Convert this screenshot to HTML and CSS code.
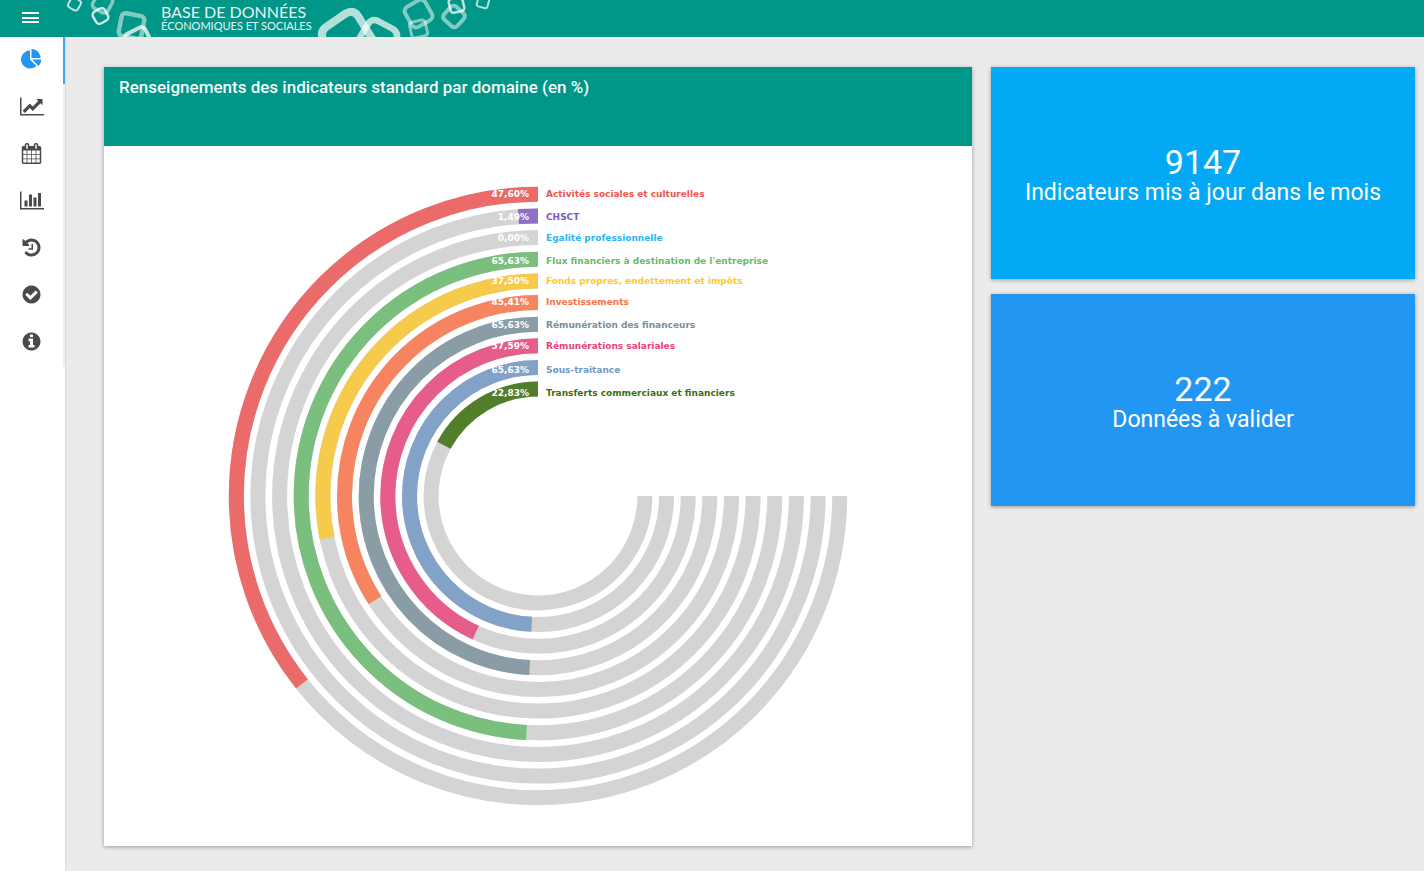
FILE: index.html
```html
<!DOCTYPE html>
<html lang="fr">
<head>
<meta charset="utf-8">
<title>Base de données économiques et sociales</title>
<link rel="stylesheet" href="styles.css">
</head>
<body>
<header class="topbar">
  <button class="menu-button" type="button" aria-label="Menu">
    <svg width="18" height="11" viewBox="0 0 18 11"><path fill="#fff" d="M0 0h17v2H0zM0 5h17v2H0zM0 9h17v2H0z"/></svg>
  </button>
  <div class="brand">
    <svg class="brand-art" width="95" height="37" viewBox="66 0 95 37" fill="none" stroke="#fff" aria-hidden="true">
      <rect x="-5.500" y="-5.500" width="11" height="11" rx="3" stroke-width="2" stroke-opacity=".75" transform="translate(74.500 4) rotate(30)"/>
      <rect x="-8.500" y="-8.500" width="17" height="17" rx="4" stroke-width="3.500" stroke-opacity=".5" transform="translate(102.500 3) rotate(28)"/>
      <rect x="-6.800" y="-6.800" width="13.600" height="13.600" rx="4" stroke-width="2.500" stroke-opacity=".8" transform="translate(100.500 16) rotate(-30)"/>
      <rect x="-11.500" y="-11.500" width="23" height="23" rx="4" stroke-width="4.500" stroke-opacity=".5" transform="translate(131.500 26) rotate(11)"/>
      <rect x="-11" y="-11" width="22" height="22" rx="4" stroke-width="4" stroke-opacity=".75" transform="translate(138.500 40.500) rotate(-27)"/>
    </svg>
    <div class="brand-name">
      <span class="brand-title">BASE DE DONNÉES</span>
      <span class="brand-sub">ÉCONOMIQUES ET SOCIALES</span>
    </div>
    <svg class="brand-art" width="186" height="37" viewBox="314 0 186 37" fill="none" stroke="#fff" aria-hidden="true">
      <path stroke-width="8" stroke-opacity=".7" stroke-linejoin="round" d="M324 42 Q319 32 326 27 L345 14 Q353 9 358 16 L373 40"/>
      <path stroke-width="6.500" stroke-opacity=".7" stroke-linejoin="round" d="M359 39 L368 24 Q372 18 378 21 L393 29 Q399 33 396 40"/>
      <rect x="-11.500" y="-11.500" width="23" height="23" rx="5" stroke-width="4" stroke-opacity=".5" transform="translate(418.500 13.500) rotate(-30)"/>
      <rect x="-8" y="-8" width="16" height="16" rx="3" stroke-width="3" stroke-opacity=".5" transform="translate(418.500 29) rotate(-13)"/>
      <rect x="-8.800" y="-8.800" width="17.600" height="17.600" rx="4" stroke-width="4" stroke-opacity=".5" transform="translate(454 16.500) rotate(42)"/>
      <rect x="-7" y="-7" width="14" height="14" rx="3" stroke-width="2.500" stroke-opacity=".75" transform="translate(456.500 5) rotate(-13)"/>
      <rect x="-5.500" y="-5.500" width="11" height="11" rx="2" stroke-width="2" stroke-opacity=".7" transform="translate(483 2) rotate(15)"/>
    </svg>
  </div>
</header>

<div class="shell">
  <nav class="sidebar" aria-label="Navigation">
    <a class="nav-item active" href="#domaines" aria-label="Domaines"><svg width="21" height="21" viewBox="0 0 1792 1792"><path d="M768 890l546 546q-106 108-247.500 168t-298.500 60q-209 0-385.500-103t-279.500-279.500-103-385.500 103-385.500 279.500-279.500 385.500-103v762zm187 6h773q0 157-60 298.500t-168 247.500zm709-128h-768v-768q209 0 385.500 103t279.500 279.500 103 385.500z"/></svg></a>
    <a class="nav-item" href="#evolution" aria-label="Évolution"><svg width="24" height="21" viewBox="0 0 2048 1792"><path d="M2048 1536v128h-2048v-1536h128v1408h1920zm-128-1248v435q0 21-19.500 29.500t-35.500-7.500l-121-121-633 633q-10 10-23 10t-23-10l-233-233-416 416-192-192 585-585q10-10 23-10t23 10l233 233 464-464-121-121q-16-16-7.500-35.500t29.500-19.500h435q14 0 23 9t9 23z"/></svg></a>
    <a class="nav-item" href="#calendrier" aria-label="Calendrier"><svg width="21" height="21" viewBox="0 0 1792 1792"><path d="M192 1664h288v-288h-288v288zm352 0h320v-288h-320v288zm-352-352h288v-320h-288v320zm352 0h320v-320h-320v320zm-352-384h288v-288h-288v288zm736 736h320v-288h-320v288zm-384-736h320v-288h-320v288zm768 736h288v-288h-288v288zm-384-352h320v-320h-320v320zm-352-864v-288q0-13-9.500-22.500t-22.500-9.500h-64q-13 0-22.500 9.500t-9.500 22.500v288q0 13 9.500 22.500t22.500 9.500h64q13 0 22.500-9.500t9.500-22.500zm736 864h288v-320h-288v320zm-384-384h320v-288h-320v288zm384 0h288v-288h-288v288zm32-480v-288q0-13-9.500-22.500t-22.500-9.500h-64q-13 0-22.500 9.500t-9.500 22.500v288q0 13 9.500 22.500t22.500 9.500h64q13 0 22.500-9.500t9.500-22.500zm384-64v1280q0 52-38 90t-90 38h-1408q-52 0-90-38t-38-90v-1280q0-52 38-90t90-38h128v-96q0-66 47-113t113-47h64q66 0 113 47t47 113v96h384v-96q0-66 47-113t113-47h64q66 0 113 47t47 113v96h128q52 0 90 38t38 90z"/></svg></a>
    <a class="nav-item" href="#statistiques" aria-label="Statistiques"><svg width="24" height="21" viewBox="0 0 2048 1792"><path d="M640 896v512h-256v-512h256zm384-512v1024h-256v-1024h256zm1024 1152v128h-2048v-1536h128v1408h1920zm-640-896v768h-256v-768h256zm384-384v1152h-256v-1152h256z"/></svg></a>
    <a class="nav-item" href="#historique" aria-label="Historique"><svg width="21" height="21" viewBox="0 0 1792 1792"><path d="M1664 896q0 156-61 298t-164 245-245 164-298 61q-172 0-327-72.500t-264-204.500q-7-10-6.500-22.500t8.500-20.500l137-138q10-9 25-9 16 2 23 12 73 95 179 147t225 52q104 0 198.500-40.500t163.500-109.500 109.500-163.500 40.500-198.500-40.500-198.500-109.500-163.500-163.500-109.500-198.500-40.500q-98 0-188 35.500t-160 101.500l137 138q31 30 14 69-17 40-59 40h-448q-26 0-45-19t-19-45v-448q0-42 40-59 39-17 69 14l130 129q107-101 244.500-156.500t284.500-55.500q156 0 298 61t245 164 164 245 61 298zm-640-288v448q0 14-9 23t-23 9h-320q-14 0-23-9t-9-23v-64q0-14 9-23t23-9h224v-352q0-14 9-23t23-9h64q14 0 23 9t9 23z"/></svg></a>
    <a class="nav-item" href="#validation" aria-label="Validation"><svg width="21" height="21" viewBox="0 0 1792 1792"><path d="M1412 734q0-28-18-46l-91-90q-19-19-45-19t-45 19l-408 407-226-226q-19-19-45-19t-45 19l-91 90q-18 18-18 46 0 27 18 45l362 362q19 19 45 19 27 0 46-19l543-543q18-18 18-45zm252 162q0 209-103 385.500t-279.500 279.500-385.500 103-385.500-103-279.500-279.500-103-385.500 103-385.500 279.500-279.500 385.500-103 385.500 103 279.500 279.500 103 385.500z"/></svg></a>
    <a class="nav-item" href="#informations" aria-label="Informations"><svg width="21" height="21" viewBox="0 0 1792 1792"><path d="M1152 1376v-160q0-14-9-23t-23-9h-96v-512q0-14-9-23t-23-9h-320q-14 0-23 9t-9 23v160q0 14 9 23t23 9h96v320h-96q-14 0-23 9t-9 23v160q0 14 9 23t23 9h448q14 0 23-9t9-23zm-128-896v-160q0-14-9-23t-23-9h-192q-14 0-23 9t-9 23v160q0 14 9 23t23 9h192q14 0 23-9t9-23zm640 416q0 209-103 385.500t-279.500 279.500-385.500 103-385.500-103-279.500-279.500-103-385.500 103-385.500 279.500-279.500 385.500-103 385.500 103 279.500 279.500 103 385.500z"/></svg></a>
  </nav>

  <main class="dashboard">
    <section class="card">
      <h1 class="card-title">Renseignements des indicateurs standard par domaine (en %)</h1>
      <svg class="chart" viewBox="0 0 868 700" role="img" aria-label="Renseignements par domaine">
        <g transform="translate(434 350)">
          <g class="track">
            <path d="M0-301.700A301.700 301.700 0 1 0 301.700 0"/>
            <path d="M0-280.100A280.100 280.100 0 1 0 280.100 0"/>
            <path d="M0-258.400A258.400 258.400 0 1 0 258.400 0"/>
            <path d="M0-236.800A236.800 236.800 0 1 0 236.800 0"/>
            <path d="M0-215.100A215.100 215.100 0 1 0 215.100 0"/>
            <path d="M0-193.500A193.500 193.500 0 1 0 193.500 0"/>
            <path d="M0-171.800A171.800 171.800 0 1 0 171.800 0"/>
            <path d="M0-150.200A150.200 150.200 0 1 0 150.200 0"/>
            <path d="M0-128.500A128.500 128.500 0 1 0 128.500 0"/>
            <path d="M0-106.900A106.900 106.900 0 1 0 106.900 0"/>
          </g>
          <g class="value">
            <path pathLength="100" stroke="#ea6b6a" stroke-dasharray="47.600 200" d="M0-301.700A301.700 301.700 0 1 0 301.700 0"/>
            <path pathLength="100" stroke="#9070c6" stroke-dasharray="1.490 200" d="M0-280.100A280.100 280.100 0 1 0 280.100 0"/>
            <path pathLength="100" stroke="#7bbf7f" stroke-dasharray="65.630 200" d="M0-236.800A236.800 236.800 0 1 0 236.800 0"/>
            <path pathLength="100" stroke="#f6cb4b" stroke-dasharray="37.500 200" d="M0-215.100A215.100 215.100 0 1 0 215.100 0"/>
            <path pathLength="100" stroke="#f68461" stroke-dasharray="45.410 200" d="M0-193.500A193.500 193.500 0 1 0 193.500 0"/>
            <path pathLength="100" stroke="#8a9ca5" stroke-dasharray="65.630 200" d="M0-171.800A171.800 171.800 0 1 0 171.800 0"/>
            <path pathLength="100" stroke="#e65c8b" stroke-dasharray="57.590 200" d="M0-150.200A150.200 150.200 0 1 0 150.200 0"/>
            <path pathLength="100" stroke="#82a2c7" stroke-dasharray="65.630 200" d="M0-128.500A128.500 128.500 0 1 0 128.500 0"/>
            <path pathLength="100" stroke="#527d2b" stroke-dasharray="22.830 200" d="M0-106.900A106.900 106.900 0 1 0 106.900 0"/>
          </g>
        </g>
        <g class="percent">
          <text x="425" y="51">47,60%</text>
          <text x="425" y="74">1,49%</text>
          <text x="425" y="95">0,00%</text>
          <text x="425" y="118">65,63%</text>
          <text x="425" y="138">37,50%</text>
          <text x="425" y="159">45,41%</text>
          <text x="425" y="182">65,63%</text>
          <text x="425" y="203">57,59%</text>
          <text x="425" y="227">65,63%</text>
          <text x="425" y="250">22,83%</text>
        </g>
        <g class="domain">
          <text x="442" y="51" fill="#ef5350">Activités sociales et culturelles</text>
          <text x="442" y="74" fill="#7e57c2">CHSCT</text>
          <text x="442" y="95" fill="#29b6f6">Egalité professionnelle</text>
          <text x="442" y="118" fill="#66bb6a">Flux financiers à destination de l'entreprise</text>
          <text x="442" y="138" fill="#ffca28">Fonds propres, endettement et impôts</text>
          <text x="442" y="159" fill="#ff7043">Investissements</text>
          <text x="442" y="182" fill="#78909c">Rémunération des financeurs</text>
          <text x="442" y="203" fill="#ec407a">Rémunérations salariales</text>
          <text x="442" y="227" fill="#6f98c6">Sous-traitance</text>
          <text x="442" y="250" fill="#3a7010">Transferts commerciaux et financiers</text>
        </g>
      </svg>
    </section>

    <aside class="tiles">
      <section class="tile tile-light">
        <strong class="tile-number">9147</strong>
        <span class="tile-label">Indicateurs mis à jour dans le mois</span>
      </section>
      <section class="tile tile-blue">
        <strong class="tile-number">222</strong>
        <span class="tile-label">Données à valider</span>
      </section>
    </aside>
  </main>
</div>
</body>
</html>
```

FILE: styles.css
```css
* {
  box-sizing: border-box;
}

body {
  display: flex;
  flex-direction: column;
  min-height: 100vh;
  margin: 0;
  background: #ebebeb;
  font-family: Roboto, "Liberation Sans", sans-serif;
}

svg {
  display: block;
}

.topbar {
  display: flex;
  height: 37px;
  background: #009688;
  color: #fff;
}

.menu-button {
  width: 66px;
  padding: 0 0 2px 22px;
  border: 0;
  background: none;
  cursor: pointer;
}

.brand {
  display: flex;
}

.brand-name {
  display: flex;
  flex-direction: column;
  width: 153px;
  padding-top: 3px;
  font-family: Lato, sans-serif;
  white-space: nowrap;
  opacity: 0.9;
}

.brand-title {
  font-size: 16px;
  line-height: 17px;
}

.brand-sub {
  font-size: 11px;
  line-height: 12px;
}

.shell {
  display: flex;
  flex: 1;
}

.sidebar {
  flex: none;
  width: 65px;
  background: #fff;
  box-shadow: 0 0 2px rgba(0, 0, 0, 0.2);
}

.nav-item {
  display: flex;
  justify-content: center;
  padding: 12px 0 14px;
  border-right: 2px solid #eee;
  fill: #4a4a4a;
}

.nav-item.active {
  border-right-color: #42a5f5;
  fill: #2196f3;
}

.dashboard {
  display: grid;
  flex: 1;
  grid-template-columns: 868fr 424fr;
  gap: 19px;
  align-items: start;
  padding: 30px 9px 25px 39px;
}

.card,
.tile {
  box-shadow: 0 1px 4px rgba(0, 0, 0, 0.35);
}

.card {
  background: #fff;
}

.card-title {
  min-height: 79px;
  margin: 0;
  padding: 10px 15px;
  background: #009688;
  color: #f2fbfa;
  font-size: 17px;
  font-weight: 500;
  line-height: 20px;
}

.chart {
  width: 100%;
  height: auto;
}

.track,
.value {
  fill: none;
  stroke-width: 15px;
}

.track {
  stroke: #d4d4d4;
}

.percent,
.domain {
  font-family: Verdana, "DejaVu Sans", sans-serif;
  font-size: 9px;
  font-weight: 700;
}

.percent {
  fill: #fff;
  text-anchor: end;
}

.tiles {
  display: grid;
  gap: 15px;
}

.tile {
  display: flex;
  flex-direction: column;
  align-items: center;
  justify-content: center;
  min-height: 212px;
  padding-top: 5px;
  color: #fff;
  text-align: center;
}

.tile-light {
  background: #03a9f4;
}

.tile-blue {
  background: #2196f3;
}

.tile-number {
  font-size: 34px;
  font-weight: 400;
  line-height: 34px;
}

.tile-label {
  font-size: 23px;
  line-height: 28px;
}
```
